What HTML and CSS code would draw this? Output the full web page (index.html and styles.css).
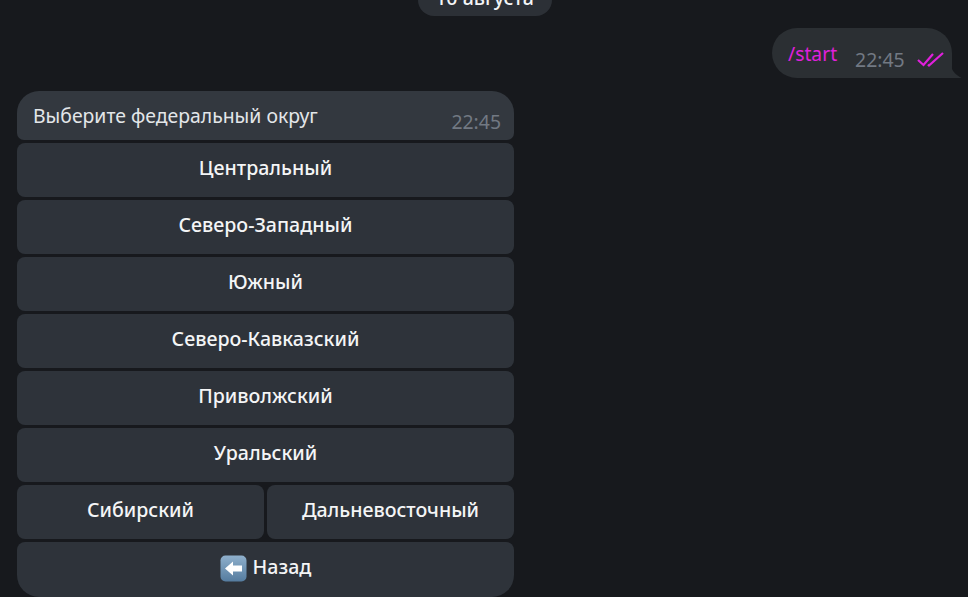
FILE: index.html
```html
<!DOCTYPE html>
<html lang="en">
<head>
    <meta charset="UTF-8">
    <meta name="viewport" content="width=device-width, initial-scale=1.0">
    <title>Chat</title>
    <link rel="stylesheet" href="styles.css">
</head>
<body>
    <div class="chat">
        <div class="date-row">
            <div class="date-pill">10 августа</div>
        </div>

        <div class="out-row">
            <div class="out-bubble">
                <span class="command">/start</span>
                <span class="time out-time">22:45</span>
                <svg class="ticks" width="28" height="16" viewBox="0 0 28 16">
                    <path d="M1 9 L6.500 14 L16 3 M11 13.500 L12 14.500 L26 2" fill="none" stroke="#e020dc" stroke-width="2.200"/>
                </svg>
                <svg class="tail" width="11" height="12" viewBox="0 0 11 12">
                    <path d="M0 0 C1 5 5 9 10.500 12 L0 12 Z" fill="#2b2f33"/>
                </svg>
            </div>
        </div>

        <div class="bot-message">
            <div class="in-bubble">
                <span class="in-text">Выберите федеральный округ</span>
                <span class="time in-time">22:45</span>
            </div>
            <div class="keyboard">
                <button class="key" type="button">Центральный</button>
                <button class="key" type="button">Северо-Западный</button>
                <button class="key" type="button">Южный</button>
                <button class="key" type="button">Северо-Кавказский</button>
                <button class="key" type="button">Приволжский</button>
                <button class="key" type="button">Уральский</button>
                <div class="key-row">
                    <button class="key" type="button">Сибирский</button>
                    <button class="key" type="button">Дальневосточный</button>
                </div>
                <button class="key key-last" type="button">
                    <svg class="back-icon" width="27" height="27" viewBox="0 0 27 27">
                        <defs>
                            <linearGradient id="backFill" x1="0" y1="0" x2="0" y2="1">
                                <stop offset="0" stop-color="#8fb0cc"/>
                                <stop offset="1" stop-color="#557c9f"/>
                            </linearGradient>
                        </defs>
                        <rect x="0.500" y="0.500" width="26" height="26" rx="5" fill="url(#backFill)"/>
                        <path d="M5 13.500 L13 6.500 V10.500 H22 V16.500 H13 V20.500 Z" fill="#fff"/>
                    </svg>
                    <span>Назад</span>
                </button>
            </div>
        </div>
    </div>
</body>
</html>
```

FILE: styles.css
```css
html, body {
    height: 100%;
}

body {
    margin: 0;
    background-color: #17191d;
    color: #eef0f2;
    font-family: "Noto Sans", "Open Sans", sans-serif;
    overflow: hidden;
}

.chat {
    display: flex;
    flex-direction: column;
    padding: 0 16px 0 17px;
}

.date-row {
    display: flex;
    justify-content: center;
    margin-top: -16px;
    margin-left: -16px;
    margin-right: -16px;
}

.date-pill {
    width: 134px;
    height: 32px;
    line-height: 28px;
    border-radius: 16px;
    background-color: #2c3036;
    font-size: 19.600px;
    font-weight: 500;
    text-align: center;
    color: #f4f5f6;
}

.out-row {
    display: flex;
    justify-content: flex-end;
    margin-top: 12px;
}

.out-bubble {
    position: relative;
    display: flex;
    align-items: flex-start;
    box-sizing: border-box;
    width: 180px;
    height: 50px;
    padding: 13px 0 0 16px;
    background-color: #2b2f33;
    border-radius: 25px 25px 0 25px;
}

.command {
    color: #e020dc;
    font-size: 19.300px;
    line-height: 26px;
}

.time {
    font-size: 19.400px;
    line-height: 26px;
    color: #727983;
}

.out-time {
    margin-left: 18px;
    margin-top: 6px;
}

.ticks {
    margin-left: 12px;
    margin-top: 10px;
}

.tail {
    position: absolute;
    right: -10px;
    bottom: 0;
}

.bot-message {
    width: 497px;
    margin-top: 13px;
}

.in-bubble {
    display: flex;
    justify-content: space-between;
    align-items: flex-start;
    box-sizing: border-box;
    height: 49px;
    padding: 12px 13px 0 16px;
    background-color: #33383f;
    border-radius: 22px 22px 7px 7px;
}

.in-text {
    font-size: 19.400px;
    line-height: 26px;
    color: #e3e6e9;
}

.in-time {
    margin-top: 6px;
}

.keyboard {
    display: flex;
    flex-direction: column;
    gap: 3px;
    margin-top: 3px;
}

.key-row {
    display: flex;
    gap: 3px;
}

.key-row .key {
    flex: 1;
}

.key {
    display: flex;
    align-items: center;
    justify-content: center;
    gap: 6px;
    height: 54px;
    padding: 0 0 5px;
    border: none;
    border-radius: 8px;
    background-color: #2e333a;
    color: #f4f5f6;
    font-family: inherit;
    font-size: 19.600px;
    font-weight: 500;
}

.key-last {
    height: 55px;
    padding-bottom: 6px;
    border-radius: 8px 8px 22px 22px;
}

.back-icon {
    flex-shrink: 0;
    margin-top: 4px;
}
```
